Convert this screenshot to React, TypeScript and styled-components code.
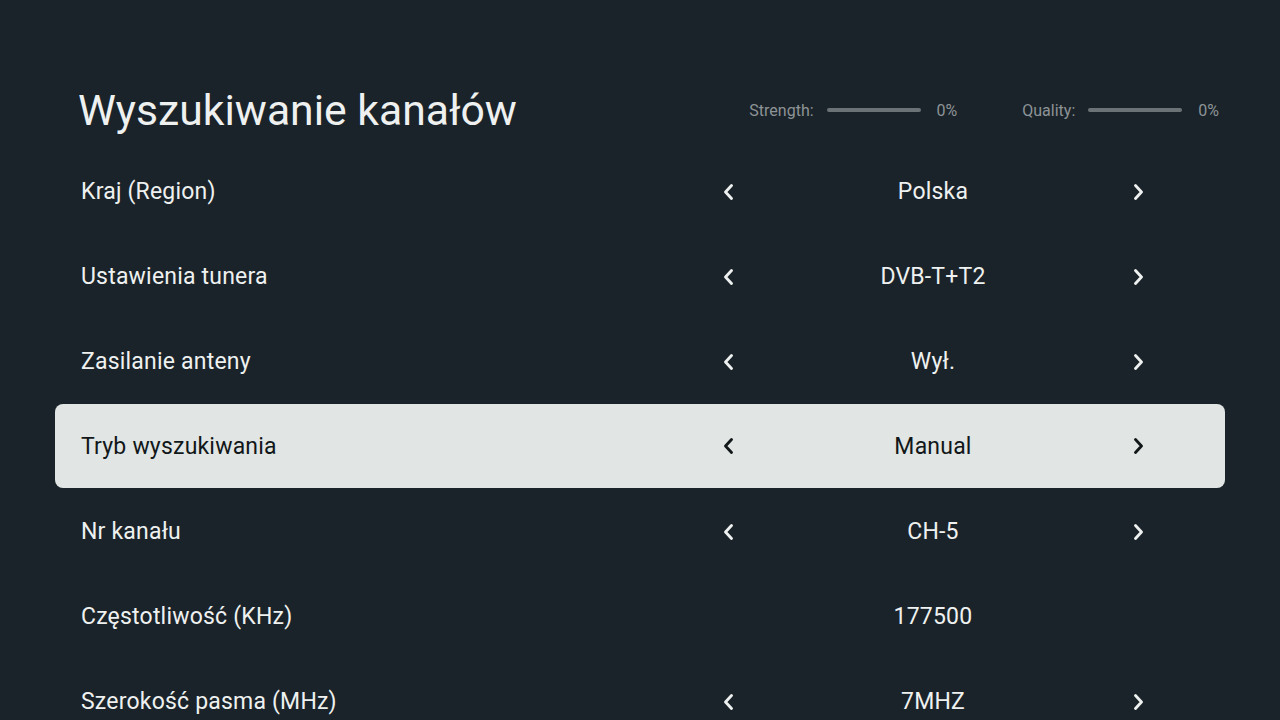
import { createGlobalStyle, styled } from "styled-components";

const GlobalStyle = createGlobalStyle`
    html, body {
        margin: 0;
        padding: 0;
        height: 100%;
        overflow: hidden;
        background: #1a2329;
    }
    body {
        font-family: Roboto, "Noto Sans", sans-serif;
        color: #eef1f0;
    }
`;

const Page = styled.div`
    width: 1280px;
    height: 720px;
    padding: 80px 55px 0;
    box-sizing: border-box;
    background: #1a2329;
`;

const Header = styled.div`
    height: 60px;
    margin-bottom: 9px;
    padding: 0 6px 0 23px;
    display: flex;
    align-items: center;
    justify-content: space-between;
`;

const Title = styled.h1`
    margin: 0;
    font-size: 42.7px;
    font-weight: 400;
    color: #eef1f0;
`;

const Meters = styled.div`
    display: flex;
    align-items: center;
    gap: 65px;
`;

const Meter = styled.div`
    display: flex;
    align-items: center;
    font-size: 16px;
    color: #8d9397;
`;

const Bar = styled.div`
    width: 94px;
    height: 4px;
    border-radius: 2px;
    background: #6c7377;
    margin: 0 16px 0 13px;
`;

const List = styled.div`
    display: flex;
    flex-direction: column;
`;

const Row = styled.div<{ $active?: boolean }>`
    height: ${(p) => (p.$active ? "84px" : "85px")};
    margin-bottom: ${(p) => (p.$active ? "1px" : "0")};
    display: flex;
    align-items: center;
    padding: 0 72px 0 26px;
    border-radius: 8px;
    font-size: 23px;
    letter-spacing: 0.2px;
    background: ${(p) => (p.$active ? "#e1e6e4" : "transparent")};
    color: ${(p) => (p.$active ? "#121719" : "#eef1f0")};
    box-sizing: border-box;
`;

const Label = styled.div`
    flex: 1;
`;

const Control = styled.div`
    width: 440px;
    display: flex;
    align-items: center;
`;

const Arrow = styled.div`
    width: 30px;
    display: flex;
    justify-content: center;
    align-items: center;
`;

const Value = styled.div`
    flex: 1;
    text-align: center;
`;

function Chevron({ dir }: { dir: "left" | "right" }) {
    const d = dir === "left" ? "M8.5 1.5 L2.5 8 L8.5 14.5" : "M2.5 1.5 L8.5 8 L2.5 14.5";
    return (
        <svg width="11" height="16" viewBox="0 0 11 16">
            <path d={d} fill="none" stroke="currentColor" strokeWidth="2.8" strokeLinecap="round" strokeLinejoin="round" />
        </svg>
    );
}

type Item = { label: string; value: string; arrows?: boolean; active?: boolean };

const items: Item[] = [
    { label: "Kraj (Region)", value: "Polska", arrows: true },
    { label: "Ustawienia tunera", value: "DVB-T+T2", arrows: true },
    { label: "Zasilanie anteny", value: "Wył.", arrows: true },
    { label: "Tryb wyszukiwania", value: "Manual", arrows: true, active: true },
    { label: "Nr kanału", value: "CH-5", arrows: true },
    { label: "Częstotliwość (KHz)", value: "177500" },
    { label: "Szerokość pasma (MHz)", value: "7MHZ", arrows: true },
];

export default function App() {
    return (
        <>
            <GlobalStyle />
            <Page>
                <Header>
                    <Title>Wyszukiwanie kanałów</Title>
                    <Meters>
                        <Meter>
                            Strength:
                            <Bar />
                            0%
                        </Meter>
                        <Meter>
                            Quality:
                            <Bar />
                            0%
                        </Meter>
                    </Meters>
                </Header>
                <List>
                    {items.map((item) => (
                        <Row key={item.label} $active={item.active}>
                            <Label>{item.label}</Label>
                            <Control>
                                <Arrow>{item.arrows && <Chevron dir="left" />}</Arrow>
                                <Value>{item.value}</Value>
                                <Arrow>{item.arrows && <Chevron dir="right" />}</Arrow>
                            </Control>
                        </Row>
                    ))}
                </List>
            </Page>
        </>
    );
}
